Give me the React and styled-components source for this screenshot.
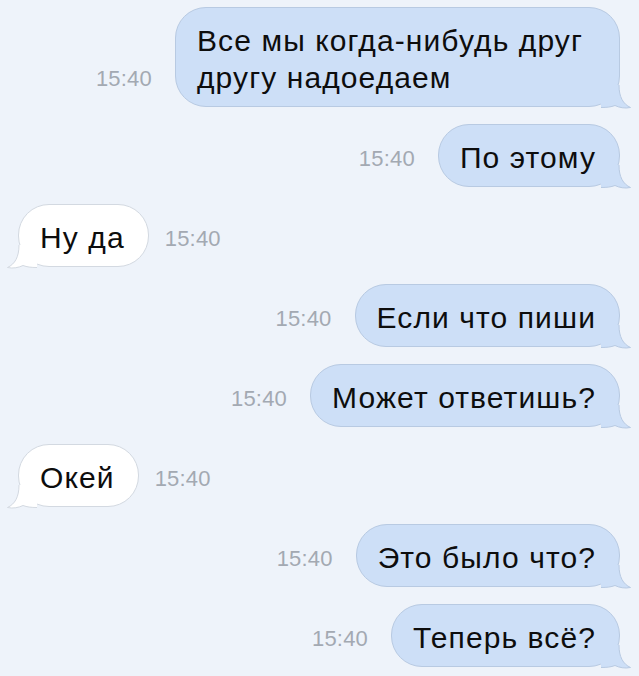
import React from 'react';
import styled, { createGlobalStyle, css } from 'styled-components';

const messages = [
  { id: 1, out: true, text: 'Все мы когда-нибудь друг другу надоедаем', time: '15:40' },
  { id: 2, out: true, text: 'По этому', time: '15:40' },
  { id: 3, out: false, text: 'Ну да', time: '15:40' },
  { id: 4, out: true, text: 'Если что пиши', time: '15:40' },
  { id: 5, out: true, text: 'Может ответишь?', time: '15:40' },
  { id: 6, out: false, text: 'Окей', time: '15:40' },
  { id: 7, out: true, text: 'Это было что?', time: '15:40' },
  { id: 8, out: true, text: 'Теперь всё?', time: '15:40' },
];

const GlobalStyle = createGlobalStyle`
  html, body {
    margin: 0;
    padding: 0;
    background: #eef3fa;
  }
`;

const Tail = ({ out }) => (
  <TailSvg $out={out} width="30" height="24" viewBox="0 0 30 24">
    <path
      d="M0 0 L18 0 C18 12 22 19 29.5 22.5 C24 23.8 18 22.5 14 20.5 C10 22 6 22.5 0 22.5 Z"
      fill={out ? '#cddff7' : '#ffffff'}
    />
    <path
      d="M18 0 C18 12 22 19 29.5 22.5 C24 23.8 18 22.5 14 20.5 C10 22 6 22.5 0 22.5"
      fill="none"
      stroke={out ? '#b8cae2' : '#d3d9e1'}
      strokeWidth="1"
    />
  </TailSvg>
);

const ChatMessage = ({ item }) => {
  const { out, text, time } = item;

  return (
    <Row $out={out}>
      {out && <Time>{time}</Time>}
      <Bubble $out={out}>
        {text}
        <Tail out={out} />
      </Bubble>
      {!out && <Time>{time}</Time>}
    </Row>
  );
};

const App = () => {
  return (
    <>
      <GlobalStyle />
      <Chat>
        {messages.map(item => (
          <ChatMessage key={item.id} item={item} />
        ))}
      </Chat>
    </>
  );
};

export default App;

const Chat = styled.div`
  width: 639px;
  height: 676px;
  box-sizing: border-box;
  padding: 7px 19px 0 18px;
  background: #eef3fa;
  display: flex;
  flex-direction: column;
  gap: 17px;
  overflow: hidden;
`;

const Row = styled.div`
  display: flex;
  align-items: flex-end;
  justify-content: ${({ $out }) => ($out ? 'flex-end' : 'flex-start')};
  gap: ${({ $out }) => ($out ? '23px' : '16px')};
`;

const Bubble = styled.div`
  ${({ $out }) => css`
    position: relative;
    box-sizing: border-box;
    max-width: 445px;
    min-height: 63px;
    padding: 14px 23px 10px 21px;
    border-radius: 31px;
    background: ${$out ? '#cddff7' : '#ffffff'};
    border: 1px solid ${$out ? '#b8cae2' : '#d3d9e1'};
    font-family: 'Liberation Sans', Arial, sans-serif;
    font-size: 30px;
    line-height: 37px;
    letter-spacing: 1.1px;
    color: #0d0d0d;
  `}
`;

const TailSvg = styled.svg`
  position: absolute;
  bottom: -3px;
  ${({ $out }) =>
    $out
      ? css`
          right: -12px;
        `
      : css`
          left: -12px;
          transform: scaleX(-1);
        `}
`;

const Time = styled.span`
  margin-bottom: 15px;
  font-family: 'Liberation Sans', Arial, sans-serif;
  font-size: 22px;
  letter-spacing: 0.2px;
  color: #a3a9b2;
  white-space: nowrap;
`;
